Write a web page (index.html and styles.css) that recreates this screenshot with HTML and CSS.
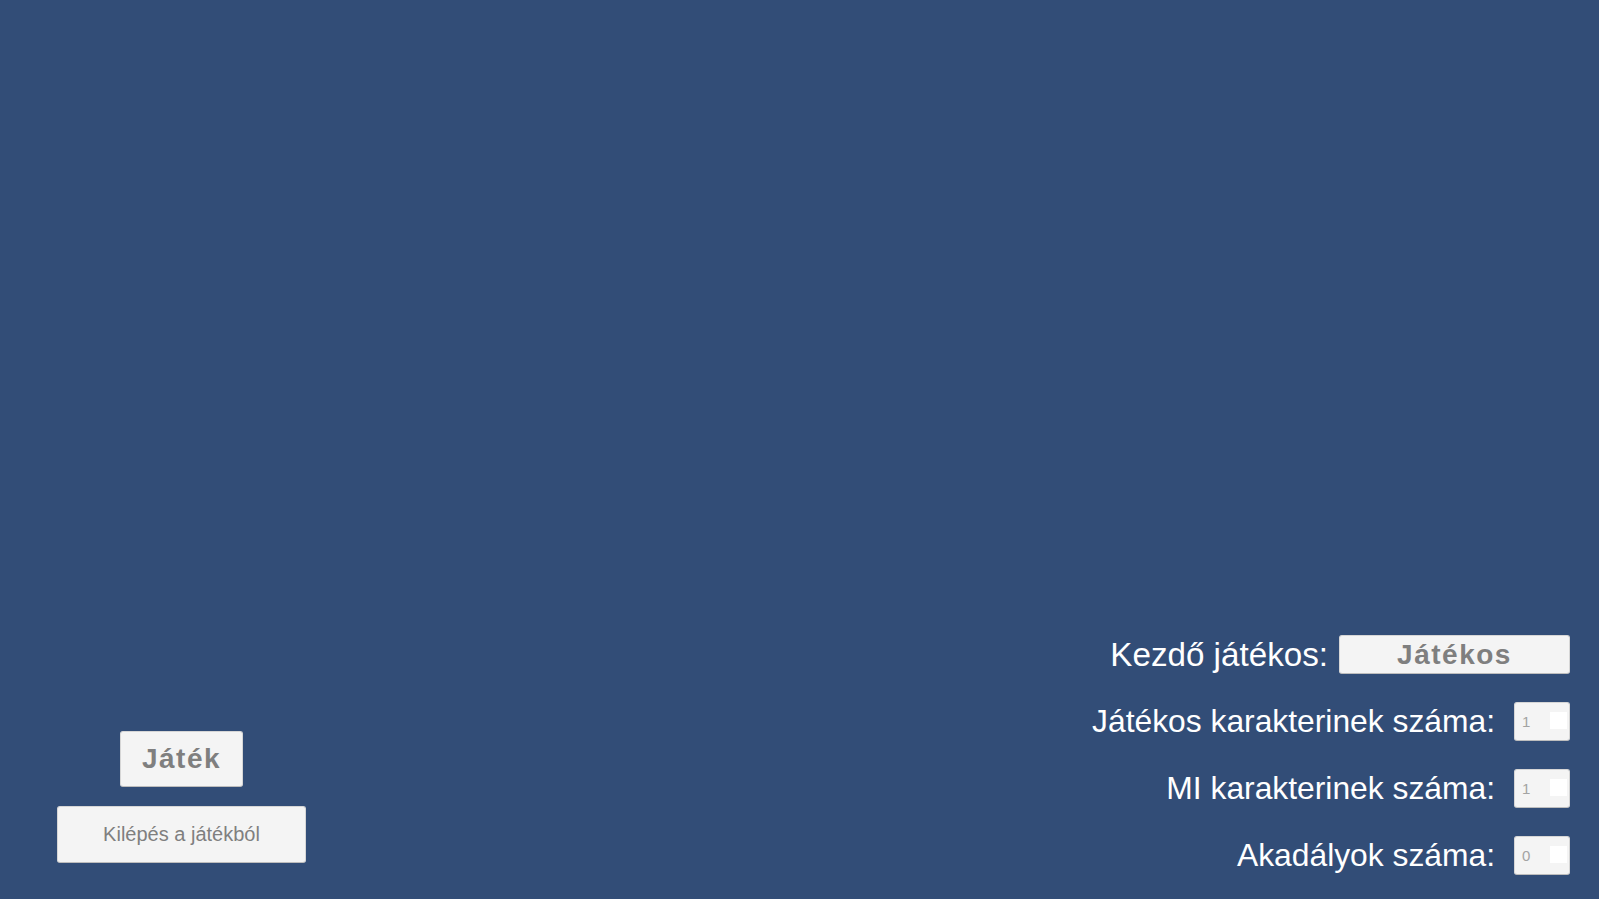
FILE: index.html
```html
<!DOCTYPE html>
<html lang="hu">
<head>
<meta charset="utf-8">
<title>Menü</title>
<link rel="stylesheet" href="styles.css">
</head>
<body>
<main class="screen">
  <section class="left-panel">
    <button class="btn btn-play">Játék</button>
    <button class="btn btn-quit">Kilépés a játékból</button>
  </section>
  <section class="settings">
    <div class="row">
      <span class="label label-start">Kezdő játékos:</span>
      <button class="btn btn-select">Játékos</button>
    </div>
    <div class="row">
      <span class="label">Játékos karakterinek száma:</span>
      <div class="num-input"><span class="num">1</span><span class="num-box"></span></div>
    </div>
    <div class="row">
      <span class="label">MI karakterinek száma:</span>
      <div class="num-input"><span class="num">1</span><span class="num-box"></span></div>
    </div>
    <div class="row">
      <span class="label">Akadályok száma:</span>
      <div class="num-input"><span class="num">0</span><span class="num-box"></span></div>
    </div>
  </section>
</main>
</body>
</html>
```
FILE: styles.css
```css
html, body {
  margin: 0;
  padding: 0;
  height: 100%;
  background: #324d77;
  font-family: "Liberation Sans", Arial, sans-serif;
}
.screen {
  box-sizing: border-box;
  height: 100vh;
  display: flex;
  justify-content: space-between;
  align-items: flex-end;
}
.left-panel {
  display: flex;
  flex-direction: column;
  align-items: center;
  gap: 19px;
  padding: 0 0 36px 57px;
}
.btn {
  box-sizing: border-box;
  border: 1px solid #d6d6d6;
  border-bottom-color: #bdbdbd;
  border-radius: 3px;
  background: #f4f4f4;
  color: #7f7f7f;
  font-family: "Liberation Sans", Arial, sans-serif;
  padding: 0;
  margin: 0;
  display: flex;
  align-items: center;
  justify-content: center;
}
.btn-play {
  width: 123px;
  height: 56px;
  font-size: 28px;
  font-weight: bold;
  letter-spacing: 1.5px;
}
.btn-quit {
  width: 249px;
  height: 57px;
  font-size: 20px;
}
.settings {
  display: flex;
  flex-direction: column;
  align-items: flex-end;
  gap: 28px;
  padding: 0 29px 24px 0;
}
.row {
  display: flex;
  align-items: center;
  height: 39px;
}
.label {
  color: #ffffff;
  font-size: 31.8px;
  margin-right: 19px;
  white-space: nowrap;
}
.label.label-start {
  font-size: 33.2px;
  margin-right: 11px;
}
.btn-select {
  width: 231px;
  height: 39px;
  font-size: 28px;
  font-weight: bold;
  letter-spacing: 1.5px;
}
.num-input {
  box-sizing: border-box;
  width: 56px;
  height: 39px;
  background: #f4f4f4;
  border: 1px solid #d6d6d6;
  border-bottom-color: #bdbdbd;
  border-radius: 3px;
  display: flex;
  align-items: center;
  justify-content: space-between;
  padding: 0 2px 0 7px;
}
.num {
  color: #a3a3a3;
  font-size: 15px;
}
.num-box {
  width: 17px;
  height: 17px;
  background: #ffffff;
  margin-top: -3px;
}
```
